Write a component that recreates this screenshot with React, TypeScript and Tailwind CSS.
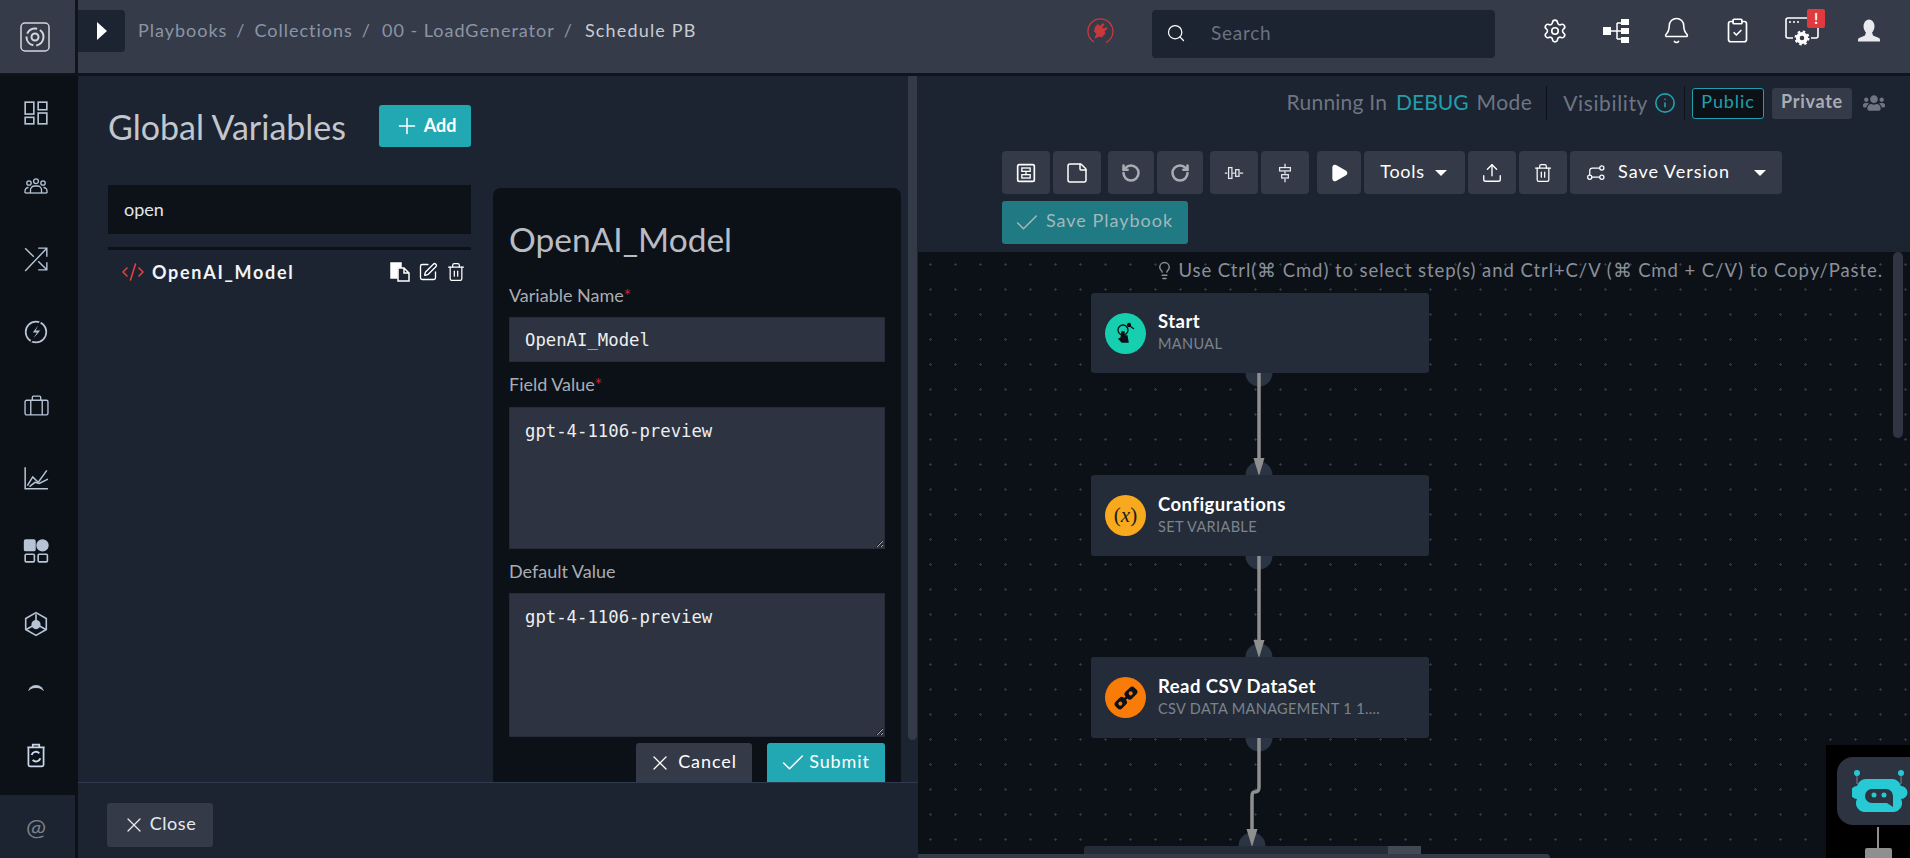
import React from 'react';
import {
  Bell, Check, ClipboardCheck, CodeXml, Info, Lightbulb, Play, Plus, RotateCcw, RotateCw,
  Search, Settings, SquarePen, StickyNote, Trash2, Upload, X,
} from 'lucide-react';
import { FaUsers } from 'react-icons/fa';

const railIcon = 'w-[26px] h-[26px] text-[#b7c4d6]';

const DashIcon = () => (
  <svg viewBox="0 0 24 24" className={railIcon} fill="none" stroke="currentColor" strokeWidth="1.5">
    <rect x="2" y="2" width="8" height="11" /><rect x="14" y="2" width="8" height="7" />
    <rect x="2" y="16" width="8" height="6" /><rect x="14" y="12" width="8" height="10" />
  </svg>
);

const TeamIcon = () => (
  <svg viewBox="0 0 24 16" className="w-[24px] h-[16px] text-[#b7c4d6]" fill="none" stroke="currentColor" strokeWidth="1.300">
    <circle cx="5" cy="5" r="2.200" /><circle cx="12" cy="3.200" r="2.400" /><circle cx="19" cy="5" r="2.200" />
    <path d="M1 15v-2a3.500 3.500 0 0 1 3.500-3.500M23 15v-2a3.500 3.500 0 0 0-3.500-3.500" />
    <path d="M6.500 15v-3a4 4 0 0 1 4-4h3a4 4 0 0 1 4 4v3" /><path d="M1 15h22" />
  </svg>
);

const CrossIcon = () => (
  <svg viewBox="0 0 24 24" className={railIcon} fill="none" stroke="currentColor" strokeWidth="1.300">
    <path d="M2 23 22 2M14 2h8v8" /><path d="M2 2l8 8M14 14l8 8M22 15v7h-8" />
  </svg>
);

const BoltIcon = () => (
  <svg viewBox="0 0 24 24" className={railIcon} fill="none" stroke="currentColor" strokeWidth="1.6">
    <circle cx="12" cy="12" r="9.5" />
    <path d="M17 1 8 13h4L6 23l11-13h-4.500z" fill="currentColor" stroke="#0c1118" strokeWidth="1" />
  </svg>
);

const CaseIcon = () => (
  <svg viewBox="0 0 24 20" className="w-[25px] h-[21px] text-[#b7c4d6]" fill="none" stroke="currentColor" strokeWidth="1.300">
    <rect x="1" y="5" width="22" height="14" rx="1.500" />
    <path d="M6.500 5v14M17.500 5v14M8 5V2a1 1 0 0 1 1-1h6a1 1 0 0 1 1 1v3" />
  </svg>
);

const ChartIcon = () => (
  <svg viewBox="0 0 24 24" className={railIcon} fill="none" stroke="currentColor" strokeWidth="1.4">
    <path d="M2 2v20h21" /><path d="M4 19l5-8 5 5 8-11" /><path d="M6 20l5-4 4 1 8-4" />
  </svg>
);

const AppsIcon = () => (
  <svg viewBox="0 0 24 24" className={railIcon} fill="none" stroke="currentColor" strokeWidth="1.5">
    <rect x="1.5" y="2" width="9.5" height="9.5" rx="1" fill="currentColor" />
    <circle cx="18" cy="6.8" r="5" fill="currentColor" />
    <rect x="2" y="15" width="8.5" height="7" rx="1" /><rect x="14" y="15" width="8.5" height="7" rx="1" />
  </svg>
);

const HexIcon = () => (
  <svg viewBox="0 0 24 24" className={railIcon} fill="none" stroke="currentColor" strokeWidth="1.5">
    <path d="M12 1.5 21.5 7v10L12 22.5 2.500 17V7z" />
    <path d="M12 3v8M3 17l9-5 9 5" /><circle cx="12" cy="12.500" r="3.500" fill="currentColor" />
  </svg>
);

const RecycleIcon = () => (
  <svg viewBox="0 0 24 24" className="w-[26px] h-[26px]" fill="none" stroke="#c8d8ea" strokeWidth="1.6">
    <path d="M4 5h16M9 5V2.500h6V5M5 5v16a1.500 1.500 0 0 0 1.500 1.500h11A1.500 1.500 0 0 0 19 21V5" />
    <path d="M8 12a4 4 0 0 1 7-1.500M16 15a4 4 0 0 1-7 1.500" strokeWidth="1.800" />
  </svg>
);

const LogoIcon = () => (
  <svg viewBox="0 0 30 30" className="w-[30px] h-[30px]" fill="none" stroke="#d3d6db" strokeWidth="1.500">
    <rect x="1" y="1" width="28" height="28" rx="4" />
    <circle cx="15" cy="15" r="8.500" strokeDasharray="12 3" strokeWidth="2" />
    <circle cx="15" cy="15" r="3.500" strokeWidth="2" />
  </svg>
);

const HierarchyIcon = () => (
  <svg viewBox="0 0 26 24" className="w-[26px] h-[24px]">
    <rect x="0" y="8" width="8" height="8" fill="#fff" />
    <path d="M8 12h6M14 4v16M14 4h4M14 12h4M14 20h4" stroke="#fff" strokeWidth="1.500" fill="none" />
    <rect x="18" y="0" width="8" height="6" fill="#fff" /><rect x="18" y="9" width="8" height="6" fill="#fff" />
    <rect x="18" y="18" width="8" height="6" fill="#fff" />
  </svg>
);

const WindowGearIcon = () => (
  <svg viewBox="0 0 34 30" className="w-[34px] h-[30px] ml-[6px]" fill="none" stroke="#fff" strokeWidth="1.600">
    <path d="M8 22H3a2 2 0 0 1-2-2V4a2 2 0 0 1 2-2h22M26 22h5a2 2 0 0 0 2-2V8" />
    <path d="M4 6h2M8 6h2M12 6h2" strokeWidth="1.500" />
    <circle cx="17" cy="22" r="4.200" strokeWidth="3.800" />
    <circle cx="17" cy="22" r="6.500" strokeWidth="2" strokeDasharray="2.500 2.600" />
  </svg>
);

const BustIcon = () => (
  <svg viewBox="0 0 24 24" className="w-[24px] h-[24px]" fill="#e8eaee">
    <ellipse cx="12" cy="7.500" rx="5.500" ry="7" />
    <path d="M9 13h6l1 3.500 6 2.500q1 .6 1 2v1.500H1V21q0-1.400 1-2l6-2.500z" />
  </svg>
);

const PlugIcon = () => (
  <svg viewBox="0 0 28 28" className="w-[28px] h-[28px]" fill="none" stroke="#c9393c" strokeWidth="1.300">
    <path d="M8 25A12.500 12.500 0 1 1 20 25.500" />
    <path d="M9 10l3-3 2 2 3-3 1.500 1.500-2.500 3 2 1 2.500-1.500 1 1.500-3 3 1 2-4 4-2.500-1-3.500 2-1-1 2-3.500-2.500-2.500z" fill="#c9393c" stroke="none" />
  </svg>
);

const AlignRowIcon = () => (
  <svg viewBox="0 0 24 24" className="w-[20px] h-[20px]" fill="none" stroke="#e8eaee" strokeWidth="1.500">
    <path d="M1 12h3M10 12h3M19 12h4" /><rect x="5.500" y="5.500" width="4" height="13" /><rect x="14" y="8" width="4" height="8" />
  </svg>
);

const AlignColIcon = () => (
  <svg viewBox="0 0 24 24" className="w-[20px] h-[20px]" fill="none" stroke="#e8eaee" strokeWidth="1.500">
    <path d="M12 1v4M12 10v3M12 19v4" /><rect x="5.500" y="5.500" width="13" height="4" /><rect x="8" y="14" width="8" height="4" />
  </svg>
);

const BlockIcon = () => (
  <svg viewBox="0 0 24 24" className="w-[20px] h-[20px]" fill="none" stroke="#fff" strokeWidth="2">
    <rect x="2" y="2" width="20" height="20" rx="2" />
    <rect x="7" y="6" width="10" height="4" strokeWidth="1.600" /><rect x="7" y="14" width="10" height="4" strokeWidth="1.600" />
    <path d="M12 10v4" strokeWidth="1.600" />
  </svg>
);

const VersionIcon = () => (
  <svg viewBox="0 0 24 24" className="w-[20px] h-[20px]" fill="none" stroke="#fff" strokeWidth="1.500">
    <circle cx="4.500" cy="17" r="2.500" /><circle cx="19" cy="6" r="2.500" /><circle cx="19" cy="17" r="2.500" />
    <path d="M4.500 14.500V9a3 3 0 0 1 3-3H16.500M7 17h9.500" />
  </svg>
);

const CopyDocIcon = () => (
  <svg viewBox="0 0 20 20" className="w-[20px] h-[20px]" fill="none" stroke="#fff" strokeWidth="1.500">
    <path d="M1 1h10v4H7v11H1z" fill="#fff" />
    <path d="M8 6h6l5 5v8H8zM14 6v5h5" />
  </svg>
);

const Caret = () => <span className="block w-0 h-0 border-x-[6px] border-x-transparent border-t-[6px] border-t-white" />;

const ToolBtn: React.FC<{ className: string; children: React.ReactNode }> = ({ className, children }) => (
  <div className={`h-[43px] flex items-center justify-center rounded bg-[#343a47] ${className}`}>{children}</div>
);

const FlowNode: React.FC<{ className: string; title: string; sub: string; dot: string; icon: React.ReactNode }> = ({ className, title, sub, dot, icon }) => (
  <div className={`absolute w-[338px] flex items-center rounded-[3px] bg-[#242c39] pl-[14px] ${className}`}>
    <div className={`w-[41px] h-[41px] rounded-full flex items-center justify-center ${dot}`}>{icon}</div>
    <div className="ml-[12px] -mt-[1px]">
      <div className="text-[18.500px] font-bold leading-[22px] tracking-[0.025em] text-white">{title}</div>
      <div className="text-[14.500px] leading-[23px] text-[#7d838d] tracking-[0.025em]">{sub}</div>
    </div>
  </div>
);

const Connectors = () => (
  <svg viewBox="0 0 992 606" className="absolute left-0 top-0 w-[992px] h-[606px]" fill="none">
    <g fill="#2a3442">
      <circle cx="341" cy="121" r="13.500" /><circle cx="341" cy="223" r="13.500" />
      <circle cx="341" cy="304" r="13.500" /><circle cx="341" cy="405" r="13.500" />
      <circle cx="341" cy="486" r="13.500" /><circle cx="334" cy="594" r="13.500" />
    </g>
    <g stroke="#8f8f8f" strokeWidth="3.500">
      <path d="M341 121V215" /><path d="M341 304V397" />
      <path d="M341 486V535q0 5-4 5h-1q-2 0-2 5V586" />
    </g>
    <g fill="#8f8f8f">
      <path d="M335.500 206h11L341 224z" /><path d="M335.500 388h11L341 406z" /><path d="M328.500 577h11L334 595z" />
    </g>
  </svg>
);

const BotIcon = () => (
  <svg viewBox="0 0 56 42" className="w-[56px] h-[42px]" fill="none">
    <path d="M5 2v12M49 2v12" stroke="#6f8d98" strokeWidth="1" />
    <circle cx="5" cy="3" r="3" fill="#27c9d4" /><circle cx="49" cy="3" r="3" fill="#27c9d4" />
    <path d="M14 9h26a9 9 0 0 1 9 7 6 6 0 0 1 0 13 9 9 0 0 1-9 13H14a9 9 0 0 1-9-13 6 6 0 0 1 0-13 9 9 0 0 1 9-7z" fill="#27c9d4" />
    <path d="M20 19h14a7 7 0 0 1 7 7v11l-6-4H20a7 7 0 0 1-7-7a7 7 0 0 1 7-7z" fill="#2d3340" />
    <circle cx="22" cy="25" r="2.500" fill="#27c9d4" /><circle cx="32" cy="25" r="2.500" fill="#27c9d4" />
  </svg>
);

const fieldClass = "block w-full bg-[#2d3340] border border-[#252b37] text-[#eceef1] text-[17.300px] font-['DejaVu_Sans_Mono',monospace] pl-[15px] outline-none";
const labelClass = 'text-[18px] leading-[22px] text-[#a9adb3]';

export default function App() {
  return (
    <div className="w-screen h-screen overflow-hidden flex flex-col bg-[#1c2331] font-['Lato',sans-serif]">
      {/* Top bar */}
      <header className="h-[76px] shrink-0 flex bg-[#353b49] border-b-[3px] border-[#10141b]">
        <div className="w-[78px] shrink-0 flex items-center justify-center border-r-[3px] border-[#10141b] pr-[6px]">
          <LogoIcon />
        </div>
        <div className="w-[47px] h-[42px] mt-[10px] flex items-center justify-center rounded-r bg-[#1c2331]">
          <span className="w-0 h-0 border-y-[9px] border-y-transparent border-l-[10px] border-l-white" />
        </div>
        <nav className="ml-[13px] h-[61px] flex items-center gap-[9px] text-[18px] tracking-[0.055em] text-[#8b95a5] whitespace-nowrap">
          <span>Playbooks</span>
          <span>/</span>
          <span>Collections</span>
          <span>/</span>
          <span className="ml-[2px]">00 - LoadGenerator</span>
          <span>/</span>
          <span className="ml-[3px] tracking-[0.065em] text-[#c8ccd3]">Schedule PB</span>
        </nav>
        <div className="ml-auto h-[61px] flex items-center mr-[38px]"><PlugIcon /></div>
        <div className="w-[343px] h-[48px] mt-[10px] flex items-center rounded bg-[#1c2331] pl-[14px] pb-[2px]">
          <Search className="w-[20px] h-[20px] text-white" strokeWidth={1.500} />
          <span className="ml-[25px] text-[19px] tracking-[0.04em] text-[#6b7280]">Search</span>
        </div>
        <div className="ml-[29px] mr-[11px] h-[61px] flex items-center text-white">
          <div className="w-[61px] flex justify-center"><Settings className="w-[26px] h-[26px]" strokeWidth={1.500} /></div>
          <div className="w-[61px] flex justify-center"><HierarchyIcon /></div>
          <div className="w-[61px] flex justify-center"><Bell className="w-[29px] h-[29px]" strokeWidth={1.300} /></div>
          <div className="w-[61px] flex justify-center"><ClipboardCheck className="w-[27px] h-[27px]" strokeWidth={1.500} /></div>
          <div className="w-[61px] flex justify-center relative">
            <WindowGearIcon />
            <span className="absolute left-[39px] -top-[7px] w-[18px] h-[19px] rounded-[2px] bg-[#e0393e] text-white text-[15px] font-bold leading-[19px] text-center">!</span>
          </div>
          <div className="w-[61px] ml-[9px] flex justify-center"><BustIcon /></div>
        </div>
      </header>

      <div className="flex-1 flex min-h-0">
        {/* Left rail */}
        <aside className="w-[78px] shrink-0 flex flex-col bg-[#0c1118]">
          <div className="flex-1 flex flex-col items-center pr-[6px] pt-[24px]">
            <div className="h-[73px] w-full flex justify-center items-start"><DashIcon /></div>
            <div className="h-[73px] w-full flex justify-center items-start pt-[5px]"><TeamIcon /></div>
            <div className="h-[73px] w-full flex justify-center items-start"><CrossIcon /></div>
            <div className="h-[73px] w-full flex justify-center items-start"><BoltIcon /></div>
            <div className="h-[73px] w-full flex justify-center items-start pt-[3px]"><CaseIcon /></div>
            <div className="h-[73px] w-full flex justify-center items-start"><ChartIcon /></div>
            <div className="h-[73px] w-full flex justify-center items-start"><AppsIcon /></div>
            <div className="h-[73px] w-full flex justify-center items-start"><HexIcon /></div>
          </div>
          <div className="flex justify-center pr-[6px] h-[6px] overflow-hidden mb-[51px]">
            <span className="w-[16px] h-[16px] rounded-full border-t-[3px] border-[#b7c4d6]" />
          </div>
          <div className="flex justify-center pr-[6px] mb-[27px]"><RecycleIcon /></div>
          <div className="w-[75px] h-[63px] flex items-center justify-center pr-[3px] bg-[#1c2331] text-[24px] text-[#7c8189]">@</div>
        </aside>

        {/* Global variables panel */}
        <section className="w-[840px] shrink-0 flex flex-col relative bg-[#1c2331]">
          <div className="h-[706px] overflow-hidden pl-[30px] pt-[29px]">
            <div className="flex items-center h-[42px]">
              <h2 className="w-[237px] text-[34px] text-[#c3c6cb] whitespace-nowrap">Global Variables</h2>
              <button className="ml-[34px] w-[92px] h-[42px] flex items-center justify-center gap-[4px] rounded-[3px] bg-[#21a8b2] text-white text-[18px] font-bold pb-[2px]">
                <Plus className="w-[26px] h-[26px] mt-[2px]" strokeWidth={1.400} />Add
              </button>
            </div>
            <div className="flex mt-[38px]">
              <div className="w-[363px] shrink-0">
                <div className="h-[49px] flex items-center bg-[#0d1219] pl-[16px] text-[18px] text-[#e3e5e8]">open</div>
                <div className="h-[3px] mt-[13px] bg-[#0d1219]" />
                <div className="mt-[2px] h-[40px] flex items-center pl-[13px] pr-[5px]">
                  <CodeXml className="w-[24px] h-[24px] text-[#e0433f]" strokeWidth={1.600} />
                  <span className="ml-[7px] text-[18px] font-bold tracking-[0.095em] text-[#f2f4f6]">OpenAI_Model</span>
                  <div className="ml-auto flex items-center gap-[8px] text-white">
                    <CopyDocIcon />
                    <SquarePen className="w-[20px] h-[20px]" strokeWidth={1.600} />
                    <Trash2 className="w-[20px] h-[20px]" strokeWidth={1.500} />
                  </div>
                </div>
              </div>
              <div className="w-[408px] ml-[22px] mt-[3px] shrink-0 rounded-t-lg bg-[#0c1118] px-[16px] pt-[32px] pb-[30px]">
                <h3 className="text-[33.500px] leading-[38px] text-[#b9bdc3] whitespace-nowrap">OpenAI_Model</h3>
                <div className={`mt-[26px] ${labelClass}`}>Variable Name<span className="text-[#d0202c]">*</span></div>
                <input readOnly defaultValue="OpenAI_Model" className={`${fieldClass} mt-[11px] h-[45px]`} />
                <div className={`mt-[11px] ${labelClass}`}>Field Value<span className="text-[#d0202c]">*</span></div>
                <textarea readOnly defaultValue="gpt-4-1106-preview" className={`${fieldClass} mt-[12px] h-[142px] pt-[11px] resize-y`} />
                <div className={`mt-[11px] ${labelClass}`}>Default Value</div>
                <textarea readOnly defaultValue="gpt-4-1106-preview" className={`${fieldClass} mt-[11px] h-[144px] pt-[11px] resize-y`} />
                <div className="flex justify-end gap-[15px] mt-[6px]">
                  <button className="w-[116px] h-[39px] flex items-center justify-center gap-[6px] rounded-t-[3px] bg-[#343a47] text-white text-[18px] tracking-[0.05em] pb-[2px] pr-[3px]">
                    <X className="w-[24px] h-[24px] mt-[2px]" strokeWidth={1.300} />Cancel
                  </button>
                  <button className="w-[118px] h-[39px] flex items-center justify-center gap-[2px] rounded-t-[3px] bg-[#21a8b2] text-white text-[18px] tracking-[0.05em] pb-[2px] pr-[3px]">
                    <Check className="w-[28px] h-[28px] mt-[2px]" strokeWidth={1.300} />Submit
                  </button>
                </div>
              </div>
            </div>
          </div>
          <footer className="flex-1 border-t border-[#2f3a4d] pl-[29px] pt-[20px]">
            <button className="w-[106px] h-[44px] flex items-center justify-center gap-[4px] rounded-[3px] bg-[#343a47] text-[#e8eaee] text-[18px] tracking-[0.03em] pb-[3px] pr-[2px]">
              <X className="w-[24px] h-[24px] mt-[3px]" strokeWidth={1.300} />Close
            </button>
          </footer>
          <div className="absolute right-[1px] top-0 w-[9px] h-[664px] rounded-b-full bg-[#343a47]" />
        </section>

        {/* Playbook designer */}
        <main className="flex-1 min-w-0 flex flex-col">
          <div className="h-[176px] shrink-0 bg-[#1c2331] pt-[10px]">
            <div className="h-[34px] flex items-center justify-end pr-[25px] text-[21px] text-[#6f7581]">
              <span className="tracking-[0.01em] -mt-[2px]">Running In</span>
              <span className="ml-[9px] text-[#21a0aa] -mt-[2px]">DEBUG</span>
              <span className="ml-[8px] tracking-[0.02em] -mt-[2px]">Mode</span>
              <span className="ml-[14px] w-px h-[34px] bg-[#0d1219]" />
              <span className="ml-[16px] tracking-[0.03em]">Visibility</span>
              <Info className="ml-[6px] w-[22px] h-[22px] text-[#21a0aa]" strokeWidth={1.800} />
              <span className="ml-[8px] w-px h-[34px] bg-[#0d1219]" />
              <span className="ml-[7px] w-[72px] h-[31px] pb-[3px] flex items-center justify-center rounded-[3px] border border-[#21a0aa] bg-[#0c1118] text-[#21a0aa] text-[18px] tracking-[0.05em]">Public</span>
              <span className="ml-[8px] w-[80px] h-[31px] pb-[3px] flex items-center justify-center rounded-[3px] bg-[#343a47] text-[#a9adb3] text-[18px] font-bold tracking-[0.04em]">Private</span>
              <FaUsers className="ml-[11px] w-[22px] h-[22px] text-[#6f7581]" />
            </div>
            <div className="mt-[31px] ml-[84px] flex">
              <ToolBtn className="w-[48px]"><BlockIcon /></ToolBtn>
              <ToolBtn className="w-[48px] ml-[3px]"><StickyNote className="w-[24px] h-[24px] text-white" strokeWidth={1.500} /></ToolBtn>
              <ToolBtn className="w-[46px] ml-[7px]"><RotateCcw className="w-[20px] h-[20px] text-[#a9adb3]" strokeWidth={3} /></ToolBtn>
              <ToolBtn className="w-[46px] ml-[3px]"><RotateCw className="w-[20px] h-[20px] text-[#a9adb3]" strokeWidth={3} /></ToolBtn>
              <ToolBtn className="w-[48px] ml-[7px]"><AlignRowIcon /></ToolBtn>
              <ToolBtn className="w-[48px] ml-[3px]"><AlignColIcon /></ToolBtn>
              <ToolBtn className="w-[44px] ml-[8px]"><Play className="w-[20px] h-[20px] fill-white text-white" /></ToolBtn>
              <ToolBtn className="w-[101px] ml-[3px] gap-[10px] text-white text-[18px] tracking-[0.04em] pb-[3px] pr-[2px]">Tools<div className="mt-[3px] flex"><Caret /></div></ToolBtn>
              <ToolBtn className="w-[48px] ml-[3px]"><Upload className="w-[22px] h-[22px] text-white" strokeWidth={1.500} /></ToolBtn>
              <ToolBtn className="w-[48px] ml-[3px]"><Trash2 className="w-[20px] h-[20px] text-white" strokeWidth={1.500} /></ToolBtn>
              <ToolBtn className="w-[212px] ml-[3px] text-white text-[18px] tracking-[0.055em]">
                <VersionIcon />
                <span className="ml-[12px] mr-[24px] pb-[3px]">Save Version</span>
                <Caret />
              </ToolBtn>
            </div>
            <button className="mt-[7px] ml-[84px] w-[186px] h-[43px] flex items-center justify-center gap-[5px] rounded-[3px] bg-[#1f7a84] text-[#a3b8bd] text-[18px] tracking-[0.055em] pb-[4px] pr-[4px]">
              <Check className="w-[28px] h-[28px] mt-[4px]" strokeWidth={1.300} />Save Playbook
            </button>
          </div>

          <div className="flex-1 relative overflow-hidden bg-[#0c1118] bg-[radial-gradient(circle,#2f3744_1px,transparent_1.2px)] bg-[length:25px_25px]">
            <div className="flex items-center justify-end pr-[27px] pt-[7px] text-[18.500px] leading-[22px] tracking-[0.05em] text-[#8a8f98] whitespace-nowrap relative">
              <Lightbulb className="w-[19px] h-[21px] mr-[4px]" strokeWidth={1.800} />
              Use Ctrl(⌘ Cmd) to select step(s) and Ctrl+C/V (⌘ Cmd + C/V) to Copy/Paste.
            </div>
            <Connectors />
            <FlowNode
              className="left-[173px] top-[41px] h-[80px]"
              title="Start"
              sub="MANUAL"
              dot="bg-[#16cfae]"
              icon={
                <svg viewBox="0 0 24 24" className="w-[24px] h-[24px]" fill="none" stroke="#0c1118" strokeWidth="1.300">
                  <circle cx="9" cy="9" r="5" /><circle cx="15" cy="4" r="1.500" fill="#0c1118" /><path d="M16 5l4 3" />
                  <path d="M8 11h2v4h3l1 6H8l-3-3 2-1z" fill="#0c1118" />
                </svg>
              }
            />
            <FlowNode
              className="left-[173px] top-[223px] h-[81px]"
              title="Configurations"
              sub="SET VARIABLE"
              dot="bg-[#f9a91e]"
              icon={<span className="font-['Liberation_Serif',serif] text-[21px] text-[#1c1c1c]">(<i>x</i>)</span>}
            />
            <FlowNode
              className="left-[173px] top-[405px] h-[81px]"
              title="Read CSV DataSet"
              sub="CSV DATA MANAGEMENT 1 1...."
              dot="bg-[#f87c07]"
              icon={
                <svg viewBox="0 0 24 24" className="w-[32px] h-[32px]" fill="#0c1118">
                  <g transform="rotate(-45 12 12)">
                    <rect x="2" y="8.500" width="9" height="7" rx="2.500" /><rect x="12.500" y="8.500" width="9.500" height="7" rx="2.500" />
                    <circle cx="6" cy="12" r="1.500" fill="#f87c07" /><circle cx="17" cy="12" r="1.500" fill="#f87c07" />
                    <path d="M10 12h4" stroke="#0c1118" strokeWidth="2" />
                  </g>
                </svg>
              }
            />
            <div className="absolute left-[166px] top-[594px] w-[337px] h-[12px] flex justify-end rounded-t-[3px] bg-[#242c39]">
              <div className="w-[33px] bg-[#414955]" />
            </div>
            <div className="absolute left-0 bottom-0 w-[632px] h-[4px] rounded-tr bg-[#343a47]" />
            <div className="absolute right-[7px] top-0 w-[10px] h-[186px] rounded-full bg-[#2f3543]" />
            <div className="absolute right-0 bottom-0 w-[84px] h-[113px] bg-black overflow-hidden">
              <div className="absolute left-[11px] top-[12px] w-[100px] h-[68px] flex pl-[15px] pt-[13px] rounded-2xl bg-[#2d3340]">
                <BotIcon />
              </div>
              <div className="absolute left-[51px] top-[82px] w-[2px] h-[21px] bg-[#8f8f8f]" />
              <div className="absolute left-[39px] top-[103px] w-[27px] h-[10px] rounded-t-[2px] bg-[#8f8f8f]" />
            </div>
          </div>
        </main>
      </div>
    </div>
  );
}
